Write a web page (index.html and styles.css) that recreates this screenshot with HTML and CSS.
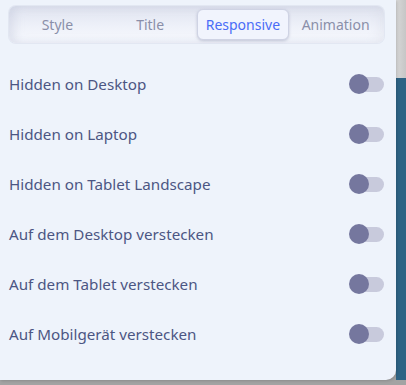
FILE: index.html
```html
<!DOCTYPE html>
<html>
<head>
<meta charset="utf-8">
<link rel="stylesheet" href="styles.css">
</head>
<body>
<div class="backdrop">
  <div class="panel">
    <div class="tabs">
      <div class="tab">Style</div>
      <div class="tab">Title</div>
      <div class="tab active">Responsive</div>
      <div class="tab">Animation</div>
    </div>
    <div class="rows">
      <div class="row"><span class="label">Hidden on Desktop</span><span class="toggle"><span class="knob"></span></span></div>
      <div class="row"><span class="label">Hidden on Laptop</span><span class="toggle"><span class="knob"></span></span></div>
      <div class="row"><span class="label">Hidden on Tablet Landscape</span><span class="toggle"><span class="knob"></span></span></div>
      <div class="row"><span class="label">Auf dem Desktop verstecken</span><span class="toggle"><span class="knob"></span></span></div>
      <div class="row"><span class="label">Auf dem Tablet verstecken</span><span class="toggle"><span class="knob"></span></span></div>
      <div class="row"><span class="label">Auf Mobilgerät verstecken</span><span class="toggle"><span class="knob"></span></span></div>
    </div>
  </div>
  <div class="side">
    <div class="side-top"></div>
    <div class="side-bottom"></div>
  </div>
</div>
</body>
</html>
```
FILE: styles.css
```css
html, body {
  margin: 0;
  padding: 0;
  width: 406px;
  height: 385px;
  overflow: hidden;
  background: #a3a3a3;
  font-family: "Noto Sans", "Open Sans", sans-serif;
}
.backdrop {
  display: flex;
  height: 380px;
}
.panel {
  width: 396px;
  height: 380px;
  flex: none;
  background: #eef3fb;
  border-radius: 0 0 10px 0;
  box-sizing: border-box;
  padding: 6px 12px 0 9px;
  position: relative;
  z-index: 1;
  box-shadow: 1px 1px 3px rgba(0,0,0,0.15);
}
.side {
  flex: 1;
  display: flex;
  flex-direction: column;
}
.side-top {
  height: 78px;
  background: linear-gradient(90deg, #d8d8d8, #c6c6c6);
}
.side-bottom {
  flex: 1;
  background: #2e6384;
}
.tabs {
  display: grid;
  grid-template-columns: repeat(4, 1fr);
  height: 37px;
  box-sizing: border-box;
  padding: 3px 2px;
  border-radius: 7px;
  background: linear-gradient(180deg, #dfe3ef 0%, #eef1f9 55%, #f7f9fe 100%);
  box-shadow: inset 6px 0 8px rgba(190,196,215,0.35), inset -6px 0 8px rgba(210,214,228,0.25), 0 0 0 1px #e2e7f2;
}
.tab {
  display: flex;
  align-items: center;
  justify-content: center;
  font-size: 14px;
  color: #8a8fa9;
  border-radius: 6px;
}
.tab.active {
  background: #f1f4fd;
  color: #4a6cf7;
  border: 1px solid #cfd3e4;
  box-shadow: 0 1px 3px rgba(110,115,150,0.35);
}
.rows {
  margin-top: 16px;
  display: flex;
  flex-direction: column;
}
.row {
  height: 50px;
  display: flex;
  align-items: center;
  justify-content: space-between;
}
.label {
  font-size: 15.2px;
  color: #4c5683;
}
.toggle {
  position: relative;
  width: 26px;
  height: 15px;
  border-radius: 8px;
  background: #c8cadc;
}
.knob {
  position: absolute;
  left: -9px;
  top: -2.5px;
  width: 20px;
  height: 20px;
  border-radius: 50%;
  background: #75779e;
}
```
